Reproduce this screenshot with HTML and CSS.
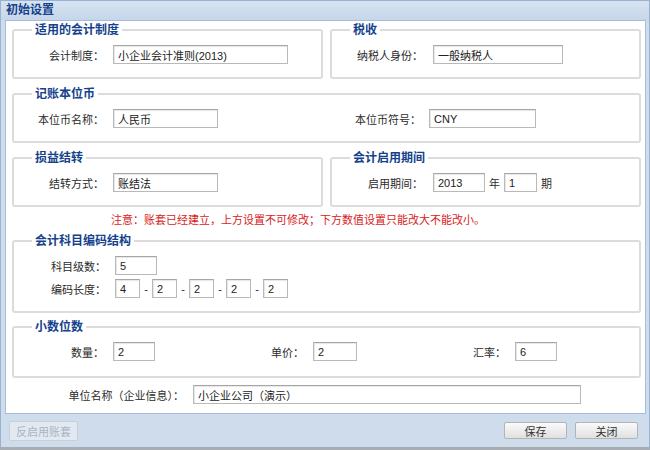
FILE: index.html
```html
<!DOCTYPE html>
<html lang="zh-CN">

<head>
    <meta charset="UTF-8">
    <title>初始设置</title>
    <link rel="stylesheet" href="styles.css">
</head>

<body>
    <div class="window">
        <div class="title-bar">初始设置</div>
        <div class="panel">
            <div class="row">
                <fieldset class="box half">
                    <legend>适用的会计制度</legend>
                    <div class="field">
                        <label>会计制度：</label>
                        <input type="text" class="w175" value="小企业会计准则(2013)">
                    </div>
                </fieldset>
                <fieldset class="box half">
                    <legend>税收</legend>
                    <div class="field">
                        <label class="lbl-right">纳税人身份：</label>
                        <input type="text" class="w130" value="一般纳税人">
                    </div>
                </fieldset>
            </div>

            <fieldset class="box">
                <legend>记账本位币</legend>
                <div class="field">
                    <div class="col-half">
                        <label>本位币名称：</label>
                        <input type="text" class="w105" value="人民币">
                    </div>
                    <div class="col-half">
                        <label class="lbl-right2">本位币符号：</label>
                        <input type="text" class="w107" value="CNY">
                    </div>
                </div>
            </fieldset>

            <div class="row">
                <fieldset class="box half">
                    <legend>损益结转</legend>
                    <div class="field">
                        <label>结转方式：</label>
                        <input type="text" class="w105" value="账结法">
                    </div>
                </fieldset>
                <fieldset class="box half">
                    <legend>会计启用期间</legend>
                    <div class="field">
                        <label class="lbl-right">启用期间：</label>
                        <input type="text" class="w52" value="2013">
                        <span class="unit">年</span>
                        <input type="text" class="w33" value="1">
                        <span class="unit">期</span>
                    </div>
                </fieldset>
            </div>

            <p class="notice">注意：账套已经建立，上方设置不可修改；下方数值设置只能改大不能改小。</p>

            <fieldset class="box code">
                <legend>会计科目编码结构</legend>
                <div class="field">
                    <label>科目级数：</label>
                    <input type="text" class="w42" value="5">
                </div>
                <div class="field">
                    <label>编码长度：</label>
                    <input type="text" class="w25" value="4">
                    <span class="dash">-</span>
                    <input type="text" class="w25" value="2">
                    <span class="dash">-</span>
                    <input type="text" class="w25" value="2">
                    <span class="dash">-</span>
                    <input type="text" class="w25" value="2">
                    <span class="dash">-</span>
                    <input type="text" class="w25" value="2">
                </div>
            </fieldset>

            <fieldset class="box decimals">
                <legend>小数位数</legend>
                <div class="field">
                    <div class="col-third">
                        <label>数量：</label>
                        <input type="text" class="w42" value="2">
                    </div>
                    <div class="col-third">
                        <label>单价：</label>
                        <input type="text" class="w44" value="2">
                    </div>
                    <div class="col-third">
                        <label>汇率：</label>
                        <input type="text" class="w42" value="6">
                    </div>
                </div>
            </fieldset>

            <div class="company">
                <label>单位名称（企业信息）：</label>
                <input type="text" class="w388" value="小企业公司（演示）">
            </div>
        </div>

        <div class="button-bar">
            <button class="btn" disabled>反启用账套</button>
            <div class="spacer"></div>
            <button class="btn wide">保存</button>
            <button class="btn wide">关闭</button>
        </div>
    </div>
</body>

</html>
```

FILE: styles.css
```css
* {
    margin: 0;
    padding: 0;
    box-sizing: border-box;
}

body {
    font-family: 'Liberation Sans', 'Noto Sans CJK SC', sans-serif;
    font-size: 11px;
    color: #2b2b2b;
    background: #fff;
}

.window {
    width: 650px;
    height: 450px;
    background: #cedcec;
    border: 1px solid #98b2d2;
    border-bottom: 3px solid #a8adb4;
    display: flex;
    flex-direction: column;
}

.title-bar {
    height: 19px;
    line-height: 18px;
    padding-left: 5px;
    font-size: 12px;
    font-weight: bold;
    color: #15428b;
    background: linear-gradient(#d7e3f1, #c6d6ea);
}

.panel {
    margin: 0 3px 0 4px;
    height: 394px;
    background: #fff;
    border: 1px solid #a5bedc;
    padding: 2px 4px 0 6px;
}

.row {
    display: flex;
    gap: 7px;
}

/* groupbox */
.box {
    border: 2px solid #dcdcdc;
    border-radius: 3px;
    padding: 8px 10px 13px;
    margin-bottom: 8px;
}

.box.half {
    width: 311px;
}

.box.code {
    margin-bottom: 7px;
}

.box.decimals {
    padding-bottom: 15px;
    margin-bottom: 7px;
}

.box legend {
    font-size: 12px;
    font-weight: bold;
    color: #15428b;
    line-height: 14px;
    padding: 0 3px;
    margin-left: 8px;
}

.field {
    display: flex;
    align-items: center;
    height: 19px;
}

.field + .field {
    margin-top: 4px;
}

.field label {
    flex-shrink: 0;
    width: 80px;
    text-align: right;
    margin-right: 9px;
}

.code .field label {
    width: 82px;
}

.field .lbl-right {
    width: 81px;
    margin-right: 10px;
}

.col-half {
    display: flex;
    align-items: center;
    flex-shrink: 0;
    width: 250px;
}

.col-half .lbl-right2 {
    width: 147px;
    margin-right: 8px;
}

.col-third {
    display: flex;
    align-items: center;
    flex-shrink: 0;
    width: 200px;
}

.col-third:nth-child(2) {
    width: 202px;
}

input[type="text"] {
    flex-shrink: 0;
    height: 19px;
    border: 1px solid #b9b9b9;
    border-top-color: #a6a6a6;
    padding: 0 4px;
    font-family: 'Liberation Sans', 'Noto Sans CJK SC', sans-serif;
    font-size: 11px;
    color: #222;
    background: #fff;
    box-shadow: inset 1px 1px 1px #e6e6e6;
}

.w25 { width: 25px; }
.w33 { width: 33px; }
.w42 { width: 42px; }
.w44 { width: 44px; }
.w52 { width: 52px; }
.w105 { width: 105px; }
.w107 { width: 107px; }
.w130 { width: 130px; }
.w175 { width: 175px; }
.w388 { width: 388px; }

.unit {
    margin: 0 4px;
}

.dash {
    width: 12px;
    text-align: center;
}

.notice {
    color: #d8231d;
    line-height: 14px;
    padding-left: 99px;
    margin: -2px 0 7px;
}

.company {
    display: flex;
    align-items: center;
    height: 19px;
}

.company label {
    width: 172px;
    text-align: right;
    margin-right: 9px;
}

.button-bar {
    display: flex;
    align-items: center;
    gap: 8px;
    padding: 0 11px 0 8px;
    flex: 1;
}

.spacer {
    flex: 1;
}

.btn {
    height: 17px;
    padding: 0 6px;
    font-family: 'Liberation Sans', 'Noto Sans CJK SC', sans-serif;
    font-size: 11px;
    color: #333;
    background: linear-gradient(#fafafa, #e0e0e0);
    border: 1px solid #b4b4b4;
    border-radius: 2px;
}

.btn.wide {
    width: 63px;
}

.btn:disabled {
    height: 20px;
    color: #a8b4c4;
    background: #e3e9f1;
    border-color: #c4cfdc;
}
```
